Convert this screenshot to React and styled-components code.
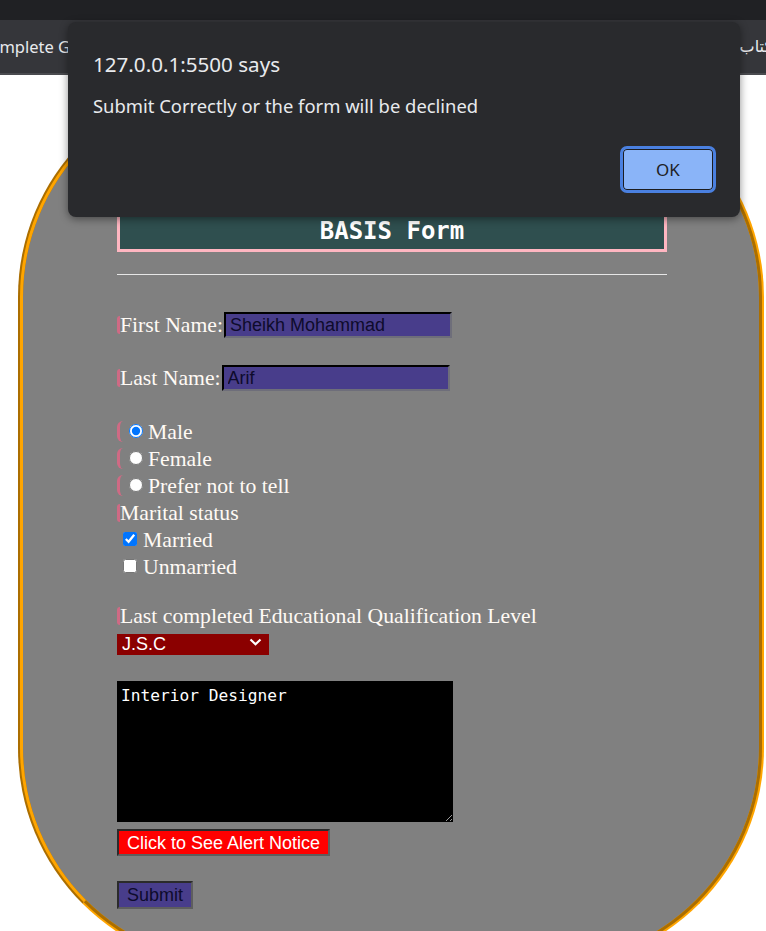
import React from "react";
import styled, { createGlobalStyle } from "styled-components";

const GlobalStyle = createGlobalStyle`
  html, body { margin: 0; padding: 0; background: #ffffff; }
  * { box-sizing: border-box; }
`;

const Screen = styled.div`
  position: relative;
  width: 766px;
  height: 931px;
  overflow: hidden;
  display: flex;
  flex-direction: column;
  background: #ffffff;
`;

const TopStrip = styled.div`
  height: 20px;
  flex: none;
  background: #202124;
`;

const BookmarkBar = styled.div`
  height: 55px;
  flex: none;
  background: #35363a;
  border-bottom: 2px solid #4a4b4f;
  display: flex;
  align-items: center;
  justify-content: space-between;
  overflow: hidden;
  color: #e8eaed;
  font-family: "Noto Sans", "DejaVu Sans", sans-serif;
  font-size: 17px;
`;

const Bookmark = styled.span`
  white-space: nowrap;
  margin-left: ${(p) => p.$left || 0}px;
  margin-right: ${(p) => p.$right || 0}px;
  direction: ${(p) => (p.$rtl ? "rtl" : "ltr")};
  font-family: ${(p) => (p.$rtl ? '"DejaVu Sans", sans-serif' : "inherit")};
  font-size: ${(p) => (p.$rtl ? 16 : 16.5)}px;
`;

const Page = styled.div`
  flex: 1;
  overflow: hidden;
  padding: 2px 0 0 18px;
`;

const FormShell = styled.form`
  width: 746px;
  height: 891px;
  border: 5px groove orange;
  border-radius: 220px;
  background: #808080;
  padding: 126px 0 0 94px;
  display: flex;
  flex-direction: column;
  align-items: flex-start;
  color: #fffaf5;
  font-family: "Liberation Serif", "Times New Roman", serif;
  font-size: 21.7px;
`;

const Banner = styled.h1`
  margin: 0;
  width: 550px;
  height: 44px;
  border: 3px solid lightpink;
  background: darkslategray;
  display: flex;
  align-items: center;
  justify-content: center;
  color: #ffffff;
  font-family: "DejaVu Sans Mono", "Liberation Mono", monospace;
  font-weight: bold;
  font-size: 24px;
  padding-top: 2px;
`;

const Rule = styled.hr`
  margin: 22px 0 0;
  width: 550px;
  height: 0;
  border: none;
  border-top: 1px solid #e6e6e6;
`;

const Row = styled.div`
  display: flex;
  align-items: center;
  height: ${(p) => p.$h || 27}px;
  margin-top: ${(p) => p.$mt || 0}px;
  white-space: nowrap;
`;

const Mark = styled.span`
  flex: none;
  width: ${(p) => (p.$round ? 6 : 4)}px;
  height: ${(p) => (p.$round ? 21 : 18)}px;
  border-left: 3px solid #cf6a84;
  border-radius: ${(p) => (p.$round ? "8px 0 0 8px" : "3px 0 0 3px")};
  margin-right: ${(p) => (p.$round ? 0 : -1)}px;
`;

const LabelText = styled.span`
  line-height: 24px;
`;

const TextInput = styled.input`
  width: 228px;
  height: 26px;
  margin-left: 1px;
  padding: 0 4px;
  background: darkslateblue;
  border: 2px inset #767676;
  border-top-color: #222;
  border-left-color: #222;
  border-right-color: #6e6e7a;
  border-bottom-color: #6e6e7a;
  color: #0e0b2c;
  font-family: "Liberation Sans", Arial, sans-serif;
  font-size: 18px;
  outline: none;
`;

const Radio = styled.input.attrs({ type: "radio" })`
  width: 14px;
  height: 14px;
  margin: 0 5px 2px 6px;
  accent-color: #0075ff;
`;

const Check = styled.input.attrs({ type: "checkbox" })`
  width: 14px;
  height: 14px;
  margin: 0 6px 2px 6px;
  accent-color: #0075ff;
`;

const SelectWrap = styled.div`
  position: relative;
  margin-top: 2px;
  width: 152px;
  height: 21px;
`;

const Select = styled.select`
  appearance: none;
  width: 152px;
  height: 21px;
  border: none;
  background: darkred;
  color: #ffffff;
  font-family: "Liberation Sans", Arial, sans-serif;
  font-size: 18px;
  padding: 0 0 0 5px;
  line-height: 21px;
  outline: none;
`;

const Chevron = styled.svg`
  position: absolute;
  right: 7px;
  top: 7px;
  pointer-events: none;
`;

const Notes = styled.textarea`
  margin-top: 29px;
  width: 336px;
  height: 141px;
  background: #000000;
  color: #ffffff;
  border: none;
  padding: 4px 4px;
  font-family: "DejaVu Sans Mono", "Liberation Mono", monospace;
  font-size: 16.2px;
  line-height: 22px;
  outline: none;
  resize: both;
`;

const ActionButton = styled.button`
  margin-top: ${(p) => p.$mt}px;
  height: ${(p) => p.$h}px;
  padding: 0 8px;
  background: ${(p) => p.$bg};
  color: ${(p) => p.$fg};
  border: 2px solid;
  border-color: #2b2b2b #5e5e5e #5e5e5e #2b2b2b;
  font-family: "Liberation Sans", Arial, sans-serif;
  font-size: 18px;
  line-height: 20px;
`;

const Dialog = styled.div`
  position: absolute;
  left: 68px;
  top: 22px;
  width: 672px;
  height: 195px;
  background: #292a2d;
  border-radius: 8px;
  box-shadow: 0 2px 8px rgba(0, 0, 0, 0.45);
  padding: 30px 24px 24px 25px;
  display: flex;
  flex-direction: column;
  font-family: "Noto Sans", "Open Sans", sans-serif;
  color: #e8eaed;
`;

const DialogTitle = styled.div`
  font-size: 20.6px;
  line-height: 24px;
`;

const DialogMessage = styled.div`
  margin-top: 18px;
  font-size: 18.4px;
  line-height: 24px;
`;

const DialogActions = styled.div`
  margin-top: auto;
  display: flex;
  justify-content: flex-end;
`;

const OkButton = styled.button`
  width: 96px;
  height: 47px;
  border-radius: 7px;
  border: 3px solid #4a80e0;
  box-shadow: inset 0 0 0 1px #1c1d20;
  background: #8ab4f8;
  color: #202124;
  font-family: "Noto Sans", "Open Sans", sans-serif;
  font-size: 17px;
  padding: 0;
`;

export default function App() {
  const noop = () => {};
  return (
    <Screen>
      <GlobalStyle />
      <TopStrip />
      <BookmarkBar>
        <Bookmark $left={-21}>Complete Guide</Bookmark>
        <Bookmark $rtl $right={-6}>كتاب</Bookmark>
      </BookmarkBar>
      <Page>
        <FormShell onSubmit={(e) => e.preventDefault()}>
          <Banner>BASIS Form</Banner>
          <Rule />
          <Row $h={26} $mt={37}>
            <Mark />
            <LabelText>First Name:</LabelText>
            <TextInput value="Sheikh Mohammad" onChange={noop} />
          </Row>
          <Row $h={26} $mt={27}>
            <Mark />
            <LabelText>Last Name:</LabelText>
            <TextInput value="Arif" onChange={noop} />
          </Row>
          <Row $mt={27}>
            <Mark $round />
            <Radio name="g" checked onChange={noop} />
            <LabelText>Male</LabelText>
          </Row>
          <Row>
            <Mark $round />
            <Radio name="g" checked={false} onChange={noop} />
            <LabelText>Female</LabelText>
          </Row>
          <Row>
            <Mark $round />
            <Radio name="g" checked={false} onChange={noop} />
            <LabelText>Prefer not to tell</LabelText>
          </Row>
          <Row>
            <Mark />
            <LabelText>Marital status</LabelText>
          </Row>
          <Row>
            <Check checked onChange={noop} />
            <LabelText>Married</LabelText>
          </Row>
          <Row>
            <Check checked={false} onChange={noop} />
            <LabelText>Unmarried</LabelText>
          </Row>
          <Row $h={26} $mt={23}>
            <Mark />
            <LabelText>Last completed Educational Qualification Level</LabelText>
          </Row>
          <SelectWrap>
            <Select value="jsc" onChange={noop}>
              <option value="jsc">J.S.C</option>
              <option value="ssc">S.S.C</option>
              <option value="hsc">H.S.C</option>
            </Select>
            <Chevron width="13" height="8" viewBox="0 0 13 8">
              <path d="M1.5 1.5 L6.5 6.2 L11.5 1.5" fill="none" stroke="#ffffff" strokeWidth="2.2" />
            </Chevron>
          </SelectWrap>
          <Notes value="Interior Designer" onChange={noop} />
          <ActionButton type="button" $mt={7} $h={27} $bg="red" $fg="#ffffff">
            Click to See Alert Notice
          </ActionButton>
          <ActionButton type="submit" $mt={25} $h={28} $bg="darkslateblue" $fg="#0e0b2c">
            Submit
          </ActionButton>
        </FormShell>
      </Page>
      <Dialog role="alertdialog">
        <DialogTitle>127.0.0.1:5500 says</DialogTitle>
        <DialogMessage>Submit Correctly or the form will be declined</DialogMessage>
        <DialogActions>
          <OkButton type="button">OK</OkButton>
        </DialogActions>
      </Dialog>
    </Screen>
  );
}
